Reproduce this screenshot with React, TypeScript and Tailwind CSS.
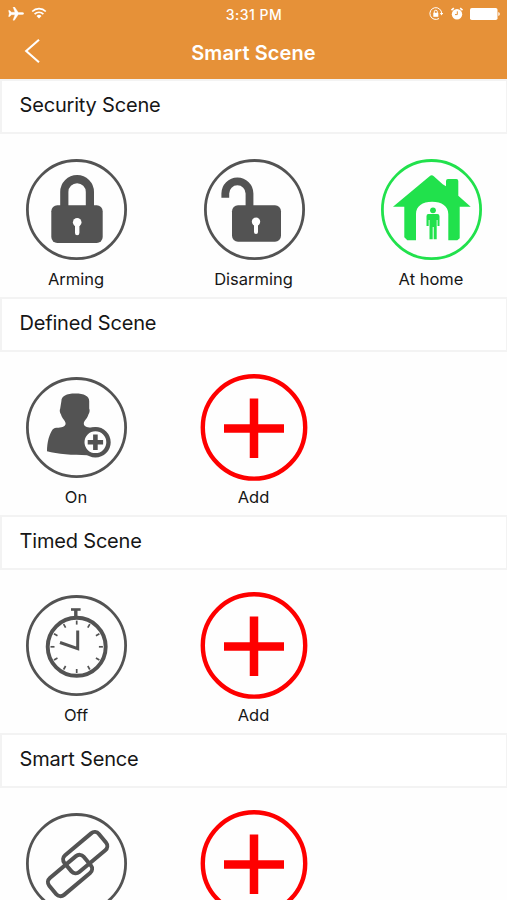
import type { ReactNode } from 'react';

function Badge({ children, color = '#535353' }: { children: ReactNode; color?: string }) {
  return (
    <svg className="h-[111px] w-[111px]" fill="none" viewBox="0 0 111 111">
      <circle cx="55.5" cy="55.6" r="49.1" stroke={color} strokeWidth="2.8" />
      {children}
    </svg>
  );
}

function LockIcon() {
  return (
    <Badge>
      <path d="M43.3 54V38a12.8 12.8 0 0 1 25.6 0v16" stroke="#535353" strokeWidth="8.2" />
      <rect fill="#535353" height="37.7" rx="6" width="51.4" x="30.3" y="51.3" />
      <circle cx="56.2" cy="68.2" fill="#fff" r="4.3" />
      <path d="M56.2 69v10" stroke="#fff" strokeLinecap="round" strokeWidth="4.4" />
    </Badge>
  );
}

function UnlockIcon() {
  return (
    <Badge>
      <path d="M26.3 43.7v-4.2a12.1 12.1 0 0 1 24.2 0V54" stroke="#535353" strokeWidth="7.8" />
      <rect fill="#535353" height="36.4" rx="6" width="49" x="33" y="51.3" />
      <circle cx="57" cy="67.8" fill="#fff" r="4.2" />
      <path d="M57 69v9" stroke="#fff" strokeLinecap="round" strokeWidth="4" />
    </Badge>
  );
}

function HomeIcon() {
  return (
    <Badge color="#21e14c">
      <path
        d="M53.6 22.2q2.1-2 4.2 0l8.9 8.1 3.3 2V27q0-2 2-2h8.300q2 0 2 2v14.700l12.400 11H83.700v31.600l-2.400 2h-9V60c0-8-6.500-12.300-16.200-12.300S40 52 40 60v26.300h-8.700l-3-3V52.700H17z"
        fill="#21e14c"
      />
      <circle cx="57" cy="56.3" fill="#21e14c" r="2.9" />
      <path
        d="M52.300 60h9q2.200 0 2.200 2.200V72h-2v-6h-.8v19.300h-3V73h-1v12.300h-3.200V66h-.8v6h-2.200v-9.800q0-2.200 1.800-2.200z"
        fill="#21e14c"
      />
    </Badge>
  );
}

function UserIcon() {
  return (
    <Badge>
      <path
        d="M40.400 29c0-5 5-7.600 13.900-7.600S68.200 24 68.200 29v7.500c1 2 .2 4.800-.8 6-1 4-4.600 6.500-4.600 9 0 3 3 3.700 7 4.200h7V83c-17 .7-38-.3-50.800-3.700 0-9 2.200-17 5.600-21.800 1-1.400 3-1.800 6-1.800 4-.5 7-1.200 7-4.200 0-2.500-3.600-5-4.600-9-1-1.200-1.800-4-.8-6z"
        fill="#535353"
      />
      <circle cx="74.400" cy="70.200" fill="#fff" r="13.100" stroke="#535353" strokeWidth="4.400" />
      <path d="M66.700 70.200h15.400M74.400 62.500v15.400" stroke="#535353" strokeWidth="4.600" />
    </Badge>
  );
}

function StopwatchIcon() {
  return (
    <Badge>
      <path d="M50 19.500h9.600" stroke="#535353" strokeWidth="2.600" />
      <path d="M54.800 19.500V27" stroke="#535353" strokeWidth="3.400" />
      <circle cx="55.700" cy="56.800" r="29" stroke="#535353" strokeWidth="3.900" />
      {[0, 30, 60, 90, 120, 150, 180, 210, 240, 270, 300, 330].map((angle) => (
        <path
          d="M55.700 30.600v4"
          key={angle}
          stroke="#535353"
          strokeWidth="1.700"
          transform={`rotate(${angle} 55.700 56.800)`}
        />
      ))}
      <path d="M56.700 40.500v18.200L39 52.500" stroke="#535353" strokeWidth="3" />
    </Badge>
  );
}

function LinkIcon() {
  return (
    <Badge>
      <g stroke="#535353" strokeWidth="4">
        <rect height="22" rx="5.500" transform="rotate(-40 64.200 44.700)" width="45" x="41.700" y="33.700" />
        <rect height="22" rx="5.500" transform="rotate(-40 49 67.500)" width="45" x="26.500" y="56.500" />
      </g>
    </Badge>
  );
}

function AddIcon() {
  return (
    <svg className="h-[111px] w-[111px]" fill="none" stroke="#fe0000" viewBox="0 0 111 111">
      <circle cx="55" cy="55.400" r="51.200" strokeWidth="4.400" />
      <path d="M25 56.400h60M55 26.400v59.700" strokeWidth="8.500" />
    </svg>
  );
}

const SECTIONS = [
  {
    title: 'Security Scene',
    items: [
      { label: 'Arming', icon: <LockIcon /> },
      { label: 'Disarming', icon: <UnlockIcon /> },
      { label: 'At home', icon: <HomeIcon /> },
    ],
  },
  {
    title: 'Defined Scene',
    items: [
      { label: 'On', icon: <UserIcon /> },
      { label: 'Add', icon: <AddIcon /> },
    ],
  },
  {
    title: 'Timed Scene',
    items: [
      { label: 'Off', icon: <StopwatchIcon /> },
      { label: 'Add', icon: <AddIcon /> },
    ],
  },
  {
    title: 'Smart Sence',
    items: [{ icon: <LinkIcon /> }, { icon: <AddIcon /> }],
  },
];

function StatusBar() {
  return (
    <div className="grid h-[27px] grid-cols-3 items-center pr-[7px] pl-2 text-white">
      <div className="flex items-center gap-[7px]">
        <svg className="h-[14px] w-4" fill="currentColor" viewBox="0 0 16 14">
          <path
            d="M15.800 6.500c0 .6-.7 1-1.500 1h-4L6.400 13.200H5l2-5.500H3.400L1.800 9.500H.6l.7-3L.6 3.500h1.200l1.600 1.800H7L5-.2h1.400l3.900 5.700h4c.8 0 1.500.4 1.500 1z"
            stroke="currentColor"
            strokeWidth=".4"
          />
        </svg>
        <svg className="mb-px h-3 w-4" fill="none" stroke="currentColor" viewBox="0 0 16 12">
          <path d="M1.200 4.500a9.600 9.600 0 0 1 13.600 0M3.600 7.100a6.200 6.200 0 0 1 8.800 0" strokeWidth="1.700" />
          <path d="M8 11.600 5.500 9a3.600 3.600 0 0 1 5 0z" fill="currentColor" stroke="none" />
        </svg>
      </div>
      <div className="pt-px text-center text-[14px] font-medium tracking-[0.500px] whitespace-nowrap">
        3:31 PM
      </div>
      <div className="flex items-center justify-end">
        <svg className="mr-2 h-[14px] w-[14px]" fill="none" viewBox="0 0 14 14">
          <path d="M12.700 6.500A5.900 5.900 0 1 0 10 11.500" stroke="currentColor" />
          <path d="M10.800 6h3.400l-1.700 2.500z" fill="currentColor" />
          <rect fill="currentColor" height="4" width="5" x="4.300" y="5.800" />
          <path d="M5.300 6V4.700a1.500 1.500 0 0 1 3 0V6" stroke="currentColor" />
        </svg>
        <svg className="mr-[7px] h-[14px] w-3" fill="none" viewBox="0 0 12 14">
          <circle cx="6" cy="7.200" fill="currentColor" r="5.200" />
          <path d="M.5 3.200 2.800 1.200M11.500 3.200 9.200 1.200" stroke="currentColor" strokeWidth="1.700" />
          <path d="M6.300 4.300v3.300H4" stroke="#e69138" />
        </svg>
        <svg className="h-3 w-[30px]" fill="currentColor" viewBox="0 0 30 12">
          <rect height="12" rx="1.800" width="27.500" />
          <path d="M28.300 4q1.500.5 1.500 2t-1.500 2z" />
        </svg>
      </div>
    </div>
  );
}

export default function App() {
  return (
    <div className="h-[900px] w-full overflow-hidden bg-[#fefefe] font-['Inter','Liberation_Sans',sans-serif] text-[#161616]">
      <header className="h-[79px] bg-[#e69138]">
        <StatusBar />
        <div className="grid h-[50px] grid-cols-[60px_1fr_60px] items-center text-white">
          <button aria-label="Back" className="pb-0.5 pl-6" type="button">
            <svg className="h-6 w-4" fill="none" stroke="currentColor" viewBox="0 0 16 24">
              <path d="M15 .8 2.200 12 15 23.200" strokeWidth="2.100" />
            </svg>
          </button>
          <h1 className="pt-px text-center text-[20px] font-semibold tracking-[0.100px]">Smart Scene</h1>
        </div>
      </header>

      <main>
        {SECTIONS.map((section) => (
          <section className="h-[218px]" key={section.title}>
            <h2 className="h-[55px] border-t-2 border-r border-b-2 border-l-2 border-[#f3f3f3] bg-white pl-[17.500px] text-[20px] leading-[48px] tracking-[-0.180px]">
              {section.title}
            </h2>
            <div className="flex gap-[66.500px] pt-5 pl-[21px]">
              {section.items.map((item, index) => (
                <div className="flex w-[111px] shrink-0 flex-col items-center" key={index}>
                  {item.icon}
                  {'label' in item && (
                    <span className="mt-0.5 pr-px text-[16.500px] leading-6">{item.label}</span>
                  )}
                </div>
              ))}
            </div>
          </section>
        ))}
      </main>
    </div>
  );
}
